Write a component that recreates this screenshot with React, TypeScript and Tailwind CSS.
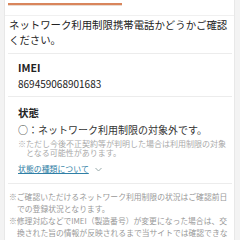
const JP = "font-['Noto_Sans_CJK_JP','Noto_Sans',sans-serif]";

const Divider = () => <div className="h-px bg-[#ececec]" />;

const App = () => {
  return (
    <div className={`w-[240px] h-[240px] overflow-hidden bg-[#f3f3f3] flex items-start ${JP}`}>
      <div className="ml-[4px] w-[231px] min-h-full shrink-0 bg-white border-x border-[#e8e8e8]">
        <div className="h-[16px] border-b border-[#f0f0f0] pt-[3px]">
          <div className="ml-[3px] w-[114px] h-[2px] bg-[#d9855c] shadow-[0_1px_0_#eadbd0]" />
        </div>
        <div className="pl-[3px] pr-[2px]">
          <p className="pl-[1px] pt-[1px] pb-[6px] text-[10.4px] leading-[15px] text-[#222]">
            ネットワーク利用制限携帯電話かどうかご確認ください。
          </p>
          <Divider />
          <div className="px-[10px] pt-[6px] pb-[4px]">
            <div className="text-[10.5px] font-bold leading-[16px] text-[#222]">IMEI</div>
            <div className="text-[10px] leading-[16px] text-[#222]">869459068901683</div>
          </div>
          <Divider />
          <div className="pl-[10px] pr-[2px] pt-[7px] pb-[8px]">
            <div className="text-[10.5px] font-bold leading-[17px] text-[#222]">状態</div>
            <div className="mt-[1px] text-[10px] leading-[16px] text-[#333]">○：ネットワーク利用制限の対象外です。</div>
            <div className="mt-[1px] pl-[8px] -indent-[8px] text-[8px] leading-[9px] text-[#aaa]">
              ※ただし今後不正契約等が判明した場合は利用制限の対象となる可能性があります。
            </div>
            <div className="mt-[6px] flex items-center gap-[6px]">
              <span className="text-[7.9px] leading-[12px] text-[#2f7fa6] underline underline-offset-[1px]">状態の種類について</span>
              <svg width="7" height="5" viewBox="0 0 7 5" fill="none" stroke="#9aa" strokeWidth="1">
                <path d="M0.5 1l3 3 3-3" />
              </svg>
            </div>
          </div>
          <Divider />
          <div className="pl-[1px] pt-[7px] text-[7.8px] leading-[12px] text-[#999]">
            <p className="pl-[8px] -indent-[8px]">
              ※ご確認いただけるネットワーク利用制限の状況はご確認前日での登録状況となります。
            </p>
            <p className="pl-[8px] -indent-[8px]">
              ※修理対応などでIMEI（製造番号）が変更になった場合は、交換された旨の情報が反映されるまで当サイトでは確認できないこともあります。
            </p>
          </div>
        </div>
      </div>
    </div>
  );
};

export default App;
